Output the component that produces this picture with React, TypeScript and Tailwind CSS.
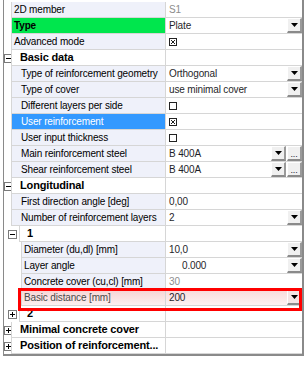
import React from 'react';

type Item = {
  kind: 'prop' | 'cat' | 'sub';
  label: string;
  level?: number;
  value?: string;
  dim?: boolean;
  drop?: boolean;
  dots?: boolean;
  check?: 'on' | 'off';
  green?: boolean;
  selected?: boolean;
  pink?: boolean;
  indentValue?: boolean;
  open?: boolean;
};

const rows: Item[] = [
  { kind: 'prop', level: 0, label: '2D member', value: 'S1', dim: true },
  { kind: 'prop', level: 0, label: 'Type', value: 'Plate', drop: true, green: true },
  { kind: 'prop', level: 0, label: 'Advanced mode', check: 'on' },
  { kind: 'cat', label: 'Basic data', open: true },
  { kind: 'prop', level: 1, label: 'Type of reinforcement geometry', value: 'Orthogonal', drop: true },
  { kind: 'prop', level: 1, label: 'Type of cover', value: 'use minimal cover', drop: true },
  { kind: 'prop', level: 1, label: 'Different layers per side', check: 'off' },
  { kind: 'prop', level: 1, label: 'User reinforcement', check: 'on', selected: true },
  { kind: 'prop', level: 1, label: 'User input thickness', check: 'off' },
  { kind: 'prop', level: 1, label: 'Main reinforcement steel', value: 'B 400A', drop: true, dots: true },
  { kind: 'prop', level: 1, label: 'Shear reinforcement steel', value: 'B 400A', drop: true, dots: true },
  { kind: 'cat', label: 'Longitudinal', open: true },
  { kind: 'prop', level: 1, label: 'First direction angle [deg]', value: '0,00' },
  { kind: 'prop', level: 1, label: 'Number of reinforcement layers', value: '2', drop: true },
  { kind: 'sub', label: '1', open: true },
  { kind: 'prop', level: 2, label: 'Diameter (du,dl) [mm]', value: '10,0', drop: true },
  { kind: 'prop', level: 2, label: 'Layer angle', value: '0.000', drop: true, indentValue: true },
  { kind: 'prop', level: 2, label: 'Concrete cover (cu,cl) [mm]', value: '30', dim: true },
  { kind: 'prop', level: 2, label: 'Basic distance [mm]', value: '200', drop: true, pink: true },
  { kind: 'sub', label: '2', open: false },
  { kind: 'cat', label: 'Minimal concrete cover', open: false },
  { kind: 'cat', label: 'Position of reinforcement...', open: false },
];

const Expander = ({ open }: { open?: boolean }) => (
  <svg width="9" height="9" viewBox="0 0 9 9" className="shrink-0">
    <rect x="0.5" y="0.5" width="8" height="8" fill="white" stroke="#7a7a7a" />
    <path d="M2 4.5h5" stroke="#000" />
    {!open && <path d="M4.5 2v5" stroke="#000" />}
  </svg>
);

const Check = ({ on }: { on: boolean }) => (
  <svg width="8" height="8" viewBox="0 0 8 8" className="shrink-0">
    <rect x="0.5" y="0.5" width="7" height="7" fill="white" stroke="#222" />
    {on && <path d="M2 2l4 4M6 2l-4 4" stroke="#222" />}
  </svg>
);

const DropButton = ({ pink }: { pink?: boolean }) => (
  <div
    className={`flex h-[15px] w-[15px] shrink-0 items-center justify-center border-t border-l border-r-2 border-b-2 border-t-white border-l-white border-r-[#9a9a9a] border-b-[#8a8a8a] ${
      pink ? 'bg-[#f4e4e4]' : 'bg-[#f0f0f0]'
    }`}
  >
    <svg width="7" height="4" viewBox="0 0 7 4">
      <polygon points="0,0 7,0 3.5,4" fill="#000" />
    </svg>
  </div>
);

const DotsButton = () => (
  <div className="ml-[1px] flex h-[15px] w-[15px] shrink-0 items-end justify-center border-t border-l border-r-2 border-b-2 border-t-white border-l-white border-r-[#9a9a9a] border-b-[#8a8a8a] bg-[#f0f0f0] text-[9px] leading-[9px] text-[#223]">
    ...
  </div>
);

const PropRow = ({ item, first }: { item: Item; first: boolean }) => {
  const gutter = item.level === 2 ? 'w-[17px]' : 'w-[7px]';
  const labelW = item.level === 2 ? 'w-[145px]' : 'w-[155px]';
  const pad = item.level === 0 ? 'pl-[2px]' : item.level === 1 ? 'pl-[9px]' : 'pl-[2px]';
  let labelBg = 'bg-[#eff1fa] text-black';
  if (item.green) labelBg = 'bg-[#00e64d] text-black font-bold';
  if (item.selected) labelBg = 'bg-[#3399ff] text-white';
  if (item.pink) labelBg = 'bg-linear-to-b from-[#f7d4d4] to-[#fcf0f0] text-[#4a4a4a]';
  const valueBg = item.pink ? 'bg-linear-to-b from-[#f9dada] to-[#fdf2f2]' : 'bg-white';
  return (
    <div className={`flex ${first ? 'h-[18px] pt-[2px]' : 'h-[16px]'}`}>
      <div className={`${gutter} shrink-0 bg-white`} />
      <div
        className={`${labelW} ${pad} ${labelBg} shrink-0 overflow-hidden whitespace-nowrap border-l border-r border-b border-[#d6d6d6] leading-[15px]`}
      >
        {item.label}
      </div>
      <div className={`flex min-w-0 flex-1 items-center border-b border-[#d6d6d6] ${valueBg}`}>
        {item.check ? (
          <div className="pl-[3px]">
            <Check on={item.check === 'on'} />
          </div>
        ) : (
          <div
            className={`flex-1 overflow-hidden whitespace-nowrap leading-[15px] ${
              item.indentValue ? 'pl-[16px]' : 'pl-[3px]'
            } ${item.dim ? 'text-[#8c8c8c]' : 'text-[#1f1f2a]'}`}
          >
            {item.value}
          </div>
        )}
        {item.drop && (
          <div className="ml-auto flex self-start">
            <DropButton pink={item.pink} />
            {item.dots && <DotsButton />}
          </div>
        )}
      </div>
    </div>
  );
};

const CatRow = ({ item }: { item: Item }) => {
  const isSub = item.kind === 'sub';
  return (
    <div className="flex h-[16px]">
      <div
        className={`${isSub ? 'w-[15px] pl-[4px]' : 'w-[7px]'} flex shrink-0 items-center bg-white`}
      >
        <Expander open={item.open} />
      </div>
      <div
        className={`${isSub ? 'w-[147px] pl-[7px]' : 'w-[155px] pl-[8px]'} shrink-0 overflow-hidden text-ellipsis whitespace-nowrap border-l border-r border-b border-[#d6d6d6] bg-white text-[11px] font-bold leading-[15px] text-black`}
      >
        {item.label}
      </div>
      <div className="flex-1 border-b border-[#d6d6d6] bg-white" />
    </div>
  );
};

export default function App() {
  return (
    <div className="h-[373px] w-[308px] bg-white font-['Liberation_Sans',Arial,sans-serif] text-[10px] tracking-[-0.15px]">
      <div className="relative ml-[3px] w-[301px] border-l border-r-2 border-b-2 border-[#8a8a8a]">
        {rows.map((item, i) =>
          item.kind === 'prop' ? (
            <PropRow key={i} item={item} first={i === 0} />
          ) : (
            <CatRow key={i} item={item} />
          )
        )}
        <div className="pointer-events-none absolute left-[14px] top-[288px] h-[23px] w-[284px] border-[3px] border-[#ff0000]" />
      </div>
    </div>
  );
}
